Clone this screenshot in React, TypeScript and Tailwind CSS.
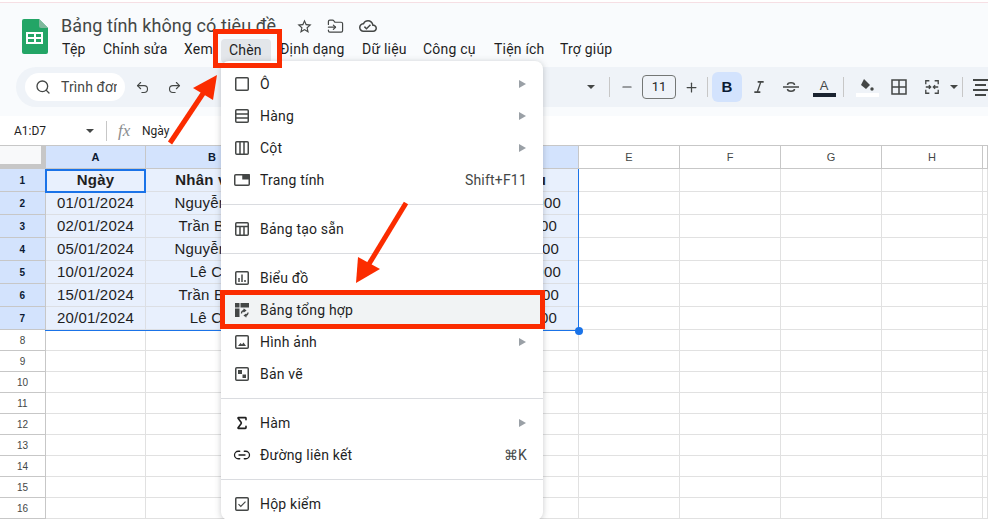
import { Redo2, Search, Undo2, FolderInput, Plus, Minus, Link2, Sigma } from "lucide-react";
import type { ReactNode } from "react";

const UI_FONT = "font-['Roboto','Liberation_Sans',sans-serif]";
const CELL_FONT = "font-['Liberation_Sans',Arial,sans-serif]";

const MENUS = [
  { label: "Tệp", className: "w-[41px]" },
  { label: "Chỉnh sửa", className: "w-[81px]" },
  { label: "Xem", className: "w-[37px]" },
  { label: "Chèn", className: "mr-[9px] h-6 w-[50px] rounded bg-[#e3e6ea] pl-2 pt-[1px]" },
  { label: "Định dạng", className: "w-[82px]" },
  { label: "Dữ liệu", className: "w-[61px]" },
  { label: "Công cụ", className: "w-[71px]" },
  { label: "Tiện ích", className: "w-[66px]" },
  { label: "Trợ giúp", className: "w-[70px]" },
];

// last column runs off the window, so its letter is not visible
const COLUMNS = ["A", "B", "C", "D", "E", "F", "G", "H", ""];
const GRID_COLS = "grid-cols-[46px_100px_133px_166px_134px_101px_101px_101px_101px_1fr]";

const ROWS = [
  { date: "01/01/2024", name: "Nguyễn An", amount: "10,000,000", pad: "pr-[17px]" },
  { date: "02/01/2024", name: "Trần Bình", amount: "5,000,000", pad: "pr-[21px]" },
  { date: "05/01/2024", name: "Nguyễn An", amount: "7,500,000", pad: "pr-[19px]" },
  { date: "10/01/2024", name: "Lê Chi", amount: "12,000,000", pad: "pr-[17px]" },
  { date: "15/01/2024", name: "Trần Bình", amount: "6,000,000", pad: "pr-[19px]" },
  { date: "20/01/2024", name: "Lê Chi", amount: "9,000,000", pad: "pr-[21px]" },
];

function Glyph({ children, size = 18 }: { children: ReactNode; size?: number }) {
  return (
    <svg width={size} height={size} viewBox="0 0 18 18" fill="none" stroke="#444746" strokeWidth="1.5" aria-hidden>
      {children}
    </svg>
  );
}

function SheetsLogo() {
  return (
    <svg width="26" height="35" viewBox="0 0 26 35" aria-hidden>
      <path d="M2 0h15l9 9v24a2 2 0 0 1-2 2H2a2 2 0 0 1-2-2V2a2 2 0 0 1 2-2z" fill="#23a566" />
      <path d="M17 0l9 9h-7a2 2 0 0 1-2-2z" fill="#7fb89c" />
      <path d="M4 13h17v12H4z" fill="#fff" />
      <path d="M6 15h6v3H6zM14 15h5v3h-5zM6 20h6v3H6zM14 20h5v3h-5z" fill="#23a566" />
    </svg>
  );
}

function Separator({ className = "" }: { className?: string }) {
  return <div className={`h-5 w-px shrink-0 bg-[#c7c7c7] ${className}`} />;
}

function Caret({ className = "" }: { className?: string }) {
  return <div className={`h-0 w-0 border-x-[4px] border-t-[4px] border-x-transparent border-t-[#444746] ${className}`} />;
}

function Toolbar() {
  return (
    <div className="ml-4 flex h-10 items-center rounded-l-full bg-[#eff3f8] pl-[9px]">
      <div className="flex h-7 w-[100px] items-center rounded-full bg-white pl-2.5 text-[14px] tracking-[0.1px] text-[#444746]">
        <Search size={16} strokeWidth={2} className="shrink-0" />
        <span className="ml-[10px] w-[56px] overflow-hidden whitespace-nowrap">Trình đơn</span>
      </div>
      <Undo2 size={15} strokeWidth={1.8} className="ml-[10px] text-[#444746]" />
      <Redo2 size={15} strokeWidth={1.8} className="ml-[17px] text-[#444746]" />
      <div className="ml-auto flex items-center">
        <Caret className="mr-[14px]" />
        <Separator className="mr-[10px]" />
        <Minus size={14} strokeWidth={2} className="mr-[8px] text-[#444746]" />
        <div className="flex h-6 w-[34px] items-center justify-center rounded border border-[#747775] text-[13px] text-[#1f1f1f]">11</div>
        <Plus size={15} strokeWidth={2} className="ml-[8px] mr-[8px] text-[#444746]" />
        <Separator className="mr-[4px]" />
        <div className={`flex size-[30px] items-center justify-center rounded-md bg-[#d3e3fd] ${CELL_FONT} text-[15px] font-bold text-[#0b1a33]`}>B</div>
        <svg width="16" height="16" viewBox="0 0 24 24" fill="#444746" className="ml-[9px]" aria-hidden>
          <path d="M10 3v2.500h3.200L8.800 18.500H5V21h9v-2.500h-3.100l4.400-13H19V3z" />
        </svg>
        <div className="ml-[15px]">
          <Glyph>
            <path d="M1 9h16M5.500 7c0-1.200 1.500-2.200 3.500-2.200S12.500 5.800 12.500 7M5.500 11c0 1.200 1.500 2.200 3.500 2.200s3.500-1 3.500-2.200" />
          </Glyph>
        </div>
        <div className="ml-[12px] flex w-[24px] flex-col items-center">
          <span className={`${CELL_FONT} text-[13px] leading-[15px] text-[#444746]`}>A</span>
          <div className="h-1 w-[23px] bg-[#1a2330]" />
        </div>
        <Separator className="ml-[7px]" />
        <div className="ml-[11px] flex w-[24px] flex-col items-center">
          <svg width="16" height="15" viewBox="0 0 16 15" aria-hidden>
            <path d="M5 1l6 6-4 4-5-4z" fill="#444746" />
            <circle cx="13" cy="11" r="1.700" fill="#444746" />
          </svg>
          <div className="h-1 w-[23px] bg-white" />
        </div>
        <div className="ml-[11px]">
          <Glyph>
            <path d="M2 2h14v14H2zM9 2v14M2 9h14" />
          </Glyph>
        </div>
        <div className="ml-[16px]">
          <Glyph size={16}>
            <path d="M6 2H2v4M2 12v4h4M12 2h4v4M16 12v4h-4M2 9h5M11 9h5M5.500 7l2 2-2 2M12.500 7l-2 2 2 2" />
          </Glyph>
        </div>
        <Caret className="ml-[10px] mr-[4px]" />
        <Separator />
        <div className="ml-[10px] flex w-[15px] flex-col gap-[3px] overflow-hidden">
          <div className="h-[2px] w-[15px] bg-[#444746]" />
          <div className="ml-[2px] h-[2px] w-[11px] bg-[#444746]" />
          <div className="h-[2px] w-[15px] bg-[#444746]" />
          <div className="ml-[2px] h-[2px] w-[11px] bg-[#444746]" />
        </div>
      </div>
    </div>
  );
}

function Header() {
  return (
    <div className="h-[114px] border-t border-[#f6dfe4] bg-[#f9fbfd]">
      <div className="flex h-[64px]">
        <div className="ml-[22px] mt-[16px]">
          <SheetsLogo />
        </div>
        <div className="ml-[13px] min-w-0">
          <div className="flex h-[32px] items-center pt-[14px]">
            <span className="w-[225px] whitespace-nowrap text-[18px] leading-6 tracking-[0.1px] text-[#444746]">Bảng tính không có tiêu đề</span>
            <svg width="17" height="17" viewBox="0 0 24 24" fill="#444746" className="ml-[10px]" aria-hidden>
              <path d="M22 9.240l-7.190-.62L12 2 9.190 8.630 2 9.240l5.460 4.730L5.820 21 12 17.270 18.180 21l-1.630-7.030L22 9.240zM12 15.400l-3.760 2.270 1-4.280-3.320-2.880 4.380-.38L12 6.100l1.710 4.040 4.380.38-3.320 2.880 1 4.280L12 15.400z" />
            </svg>
            <FolderInput size={17} strokeWidth={1.7} className="ml-[14px] text-[#444746]" />
            <svg width="18" height="18" viewBox="0 0 24 24" fill="#444746" className="ml-[15px]" aria-hidden>
              <path d="M19.350 10.040C18.670 6.590 15.640 4 12 4 9.110 4 6.600 5.640 5.350 8.040 2.340 8.360 0 10.910 0 14c0 3.310 2.690 6 6 6h13c2.760 0 5-2.240 5-5 0-2.640-2.050-4.780-4.650-4.960zM19 18H6c-2.210 0-4-1.790-4-4 0-2.050 1.530-3.760 3.560-3.970l1.070-.11.5-.95C8.080 7.140 9.940 6 12 6c2.620 0 4.880 1.860 5.390 4.430l.3 1.500 1.530.11c1.560.1 2.780 1.410 2.780 2.960 0 1.650-1.350 3-3 3zm-9-3.820l-2.090-2.090L6.500 13.500 10 17l6.010-6.010-1.410-1.410z" />
            </svg>
          </div>
          <div className="ml-[1px] mt-[4px] flex text-[14px] leading-5 tracking-[0.2px] text-[#1f1f1f]">
            {MENUS.map((menu) => (
              <span key={menu.label} className={`${menu.className} shrink-0 whitespace-nowrap`}>
                {menu.label}
              </span>
            ))}
          </div>
        </div>
      </div>
      <Toolbar />
    </div>
  );
}

function FormulaBar() {
  return (
    <div className="flex h-[29px] items-center border-t border-transparent bg-white text-[12px] text-[#1f1f1f]">
      <span className="ml-[14px] w-[72px]">A1:D7</span>
      <Caret />
      <div className="ml-[12px] h-5 w-px bg-[#c7c7c7]" />
      <span className="ml-[11px] w-[24px] font-['Liberation_Serif',serif] text-[17px] italic text-[#8a8d8f]">fx</span>
      <span>Ngày</span>
    </div>
  );
}

function ColumnHeader() {
  return (
    <div className={`grid h-6 ${GRID_COLS} border-y border-[#c7c7c7] text-[#444746]`}>
      <div className="relative border-r border-[#c7c7c7] bg-[#f8f9fa]">
        <div className="absolute inset-y-0 right-0 w-1 bg-[#c7c7c7]" />
        <div className="absolute inset-x-0 bottom-0 h-1 bg-[#c7c7c7]" />
      </div>
      {COLUMNS.map((col, i) => (
        <div
          key={i}
          className={`flex items-center justify-center border-r border-[#c7c7c7] text-[11px] ${CELL_FONT} ${i < 4 ? "bg-[#d3e3fd] font-bold text-[#0b1a33]" : ""}`}
        >
          {col}
        </div>
      ))}
    </div>
  );
}

function RowLabel({ n, selected }: { n: number; selected?: boolean }) {
  return (
    <div
      className={`flex items-center justify-center border-r border-b border-[#c7c7c7] text-[10px] ${CELL_FONT} ${
        selected ? "bg-[#d3e3fd] font-bold text-[#0b1a33]" : "bg-white text-[#444746]"
      }`}
    >
      {n}
    </div>
  );
}

function DataRow({ n, cells, bold }: { n: number; cells: { text: string; pad?: string }[]; bold?: boolean }) {
  return (
    <div className={`grid h-[23px] ${GRID_COLS} text-[15px] tracking-[0.2px] text-[#1f1f1f] ${CELL_FONT} ${bold ? "font-bold" : ""}`}>
      <RowLabel n={n} selected />
      {cells.map((cell, i) => (
        <div
          key={i}
          className={`flex items-center overflow-hidden whitespace-nowrap border-r border-b border-[#dcdfe4] bg-[#e8f0fd] ${
            cell.pad ? `justify-end ${cell.pad}` : "justify-center"
          }`}
        >
          {cell.text}
        </div>
      ))}
      {COLUMNS.slice(4).map((_, i) => (
        <div key={i} className="border-r border-b border-[#e1e1e1]" />
      ))}
    </div>
  );
}

function EmptyRow({ n }: { n: number }) {
  return (
    <div className={`grid h-[21px] ${GRID_COLS}`}>
      <RowLabel n={n} />
      {COLUMNS.map((_, i) => (
        <div key={i} className="border-r border-b border-[#e1e1e1]" />
      ))}
    </div>
  );
}

function SheetGrid() {
  return (
    <div className="relative">
      <ColumnHeader />
      <DataRow
        n={1}
        bold
        cells={[{ text: "Ngày" }, { text: "Nhân viên" }, { text: "" }, { text: "Doanh thu", pad: "pr-[32px]" }]}
      />
      {ROWS.map((row, i) => (
        <DataRow key={row.date} n={i + 2} cells={[{ text: row.date }, { text: row.name }, { text: "" }, { text: row.amount, pad: row.pad }]} />
      ))}
      {[8, 9, 10, 11, 12, 13, 14, 15, 16].map((n) => (
        <EmptyRow key={n} n={n} />
      ))}
      {/* selection edges, active cell and fill handle sit on top of the cells */}
      <div className="pointer-events-none absolute left-[45px] top-[24px] h-[162px] w-[534px] border-r border-b border-[#1a73e8]" />
      <div className="pointer-events-none absolute left-[45px] top-[24px] h-[24px] w-[101px] border-2 border-[#1a73e8]" />
      <div className="absolute left-[575px] top-[182px] size-2 rounded-full bg-[#1a73e8]" />
    </div>
  );
}

type MenuRow = {
  label: string;
  icon: ReactNode;
  arrow?: boolean;
  shortcut?: string;
  active?: boolean;
};

const INSERT_MENU: MenuRow[][] = [
  [
    { label: "Ô", arrow: true, icon: <rect x="2.750" y="2.750" width="12.500" height="12.500" rx="1" /> },
    { label: "Hàng", arrow: true, icon: <path d="M3.750 2.750h10.500a1 1 0 0 1 1 1v10.500a1 1 0 0 1-1 1H3.750a1 1 0 0 1-1-1V3.750a1 1 0 0 1 1-1zM2.750 7h12.500M2.750 11h12.500" /> },
    { label: "Cột", arrow: true, icon: <path d="M3.750 2.750h10.500a1 1 0 0 1 1 1v10.500a1 1 0 0 1-1 1H3.750a1 1 0 0 1-1-1V3.750a1 1 0 0 1 1-1zM7 2.750v12.500M11 2.750v12.500" /> },
    {
      label: "Trang tính",
      shortcut: "Shift+F11",
      icon: (
        <>
          <rect x="1.750" y="3.750" width="14.500" height="10.500" rx="1" />
          <path d="M10 3.750h6v4h-6z" fill="#444746" />
        </>
      ),
    },
  ],
  [{ label: "Bảng tạo sẵn", icon: <path d="M3.750 2.750h10.500a1 1 0 0 1 1 1v10.500a1 1 0 0 1-1 1H3.750a1 1 0 0 1-1-1V3.750a1 1 0 0 1 1-1zM2.750 6.500h12.500M7 6.500v8.750M11 6.500v8.750" /> }],
  [
    { label: "Biểu đồ", icon: <path d="M3.750 2.750h10.500a1 1 0 0 1 1 1v10.500a1 1 0 0 1-1 1H3.750a1 1 0 0 1-1-1V3.750a1 1 0 0 1 1-1zM6 13V9M9 13V5.500M12 13v-2" /> },
    {
      label: "Bảng tổng hợp",
      active: true,
      icon: (
        <>
          <path d="M2 2h4.500v4.500H2zM7.500 2H16v4.500H7.500zM2 7.500h4.500V16H2z" fill="#444746" stroke="none" />
          <path d="M8.500 12.500c0-2 1.500-3 3.500-3M10.500 8l2 1.500-2 1.500M15 11.500c0 2-1.500 3-3.500 3M13.500 16l-2-1.500 2-1.500" strokeWidth="1.300" />
        </>
      ),
    },
    {
      label: "Hình ảnh",
      arrow: true,
      icon: (
        <>
          <rect x="2.750" y="2.750" width="12.500" height="12.500" rx="1" />
          <path d="M5 13l2.500-3 1.500 1.500 1.500-2 2.500 3.500z" fill="#444746" stroke="none" />
        </>
      ),
    },
    {
      label: "Bản vẽ",
      icon: (
        <>
          <rect x="2.750" y="2.750" width="12.500" height="12.500" rx="1" />
          <path d="M5 5h4v4H5zM9.500 9.500H13V13H9.500z" fill="#444746" stroke="none" />
        </>
      ),
    },
  ],
  [
    { label: "Hàm", arrow: true, icon: <Sigma x={1} y={1} size={16} strokeWidth={2.4} /> },
    { label: "Đường liên kết", shortcut: "⌘K", icon: <Link2 x={0} y={0} size={18} strokeWidth={1.7} /> },
  ],
  [
    {
      label: "Hộp kiểm",
      icon: (
        <>
          <rect x="2.750" y="2.750" width="12.500" height="12.500" rx="1" />
          <path d="M5.500 9.200l2.300 2.300 4.700-4.800" strokeWidth="1.200" />
        </>
      ),
    },
  ],
];

function InsertMenu() {
  return (
    <div className="absolute left-[221px] top-[61px] w-[322px] rounded-lg bg-white pt-[7px] text-[14px] tracking-[0.2px] text-[#1f1f1f] shadow-[0_1px_6px_rgba(60,64,67,0.28)]">
      {INSERT_MENU.map((group, g) => (
        <div key={g} className={g > 0 ? "mt-2 border-t border-[#dadce0] pt-2" : ""}>
          {group.map((item) => (
            <div key={item.label} className={`flex h-8 items-center pl-3 pr-4 ${item.active ? "bg-[#f1f3f4]" : ""}`}>
              <Glyph>{item.icon}</Glyph>
              <span className="ml-[9px]">{item.label}</span>
              {item.shortcut && <span className="ml-auto text-[#444746]">{item.shortcut}</span>}
              {item.arrow && <div className="ml-auto mr-[1px] h-0 w-0 border-y-[4px] border-l-[7px] border-y-transparent border-l-[#9aa0a6]" />}
            </div>
          ))}
        </div>
      ))}
    </div>
  );
}

function Annotations() {
  return (
    <>
      <InsertMenu />
      <div className="absolute left-[213px] top-[29px] h-[39px] w-[69px] border-[5px] border-[#fb2c00]" />
      <div className="absolute left-[220px] top-[290px] h-[39px] w-[325px] border-[5px] border-[#fb2c00]" />
      <svg className="pointer-events-none absolute inset-0" width="988" height="519" aria-hidden>
        <path d="M170 143L204 92" stroke="#fb2c00" strokeWidth="5" />
        <path d="M217 75L193 88L213 100z" fill="#fb2c00" />
        <path d="M406 203L369 264" stroke="#fb2c00" strokeWidth="5" />
        <path d="M356 283L358 257L380 269z" fill="#fb2c00" />
      </svg>
    </>
  );
}

export default function App() {
  return (
    <div className={`relative h-[519px] w-[988px] overflow-hidden bg-white ${UI_FONT}`}>
      <div className="h-[2px] bg-white" />
      <Header />
      <FormulaBar />
      <SheetGrid />
      <Annotations />
    </div>
  );
}
